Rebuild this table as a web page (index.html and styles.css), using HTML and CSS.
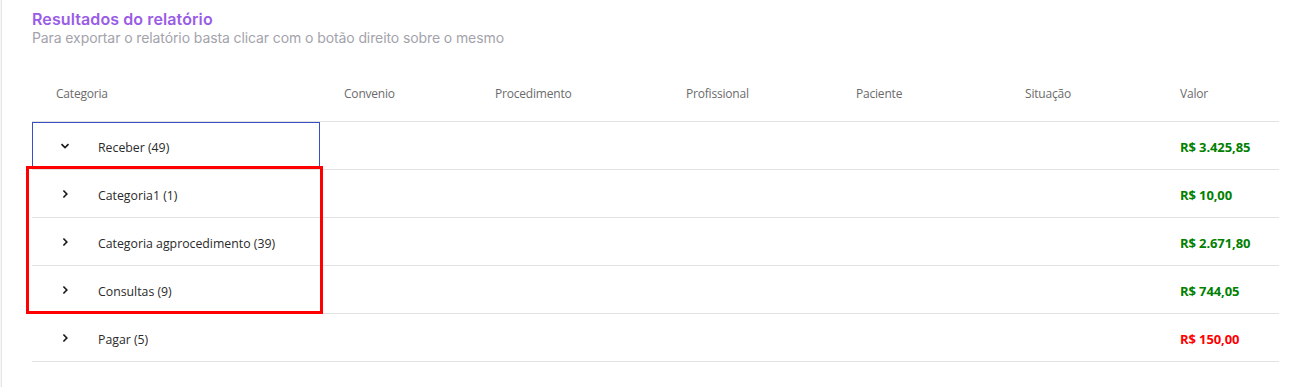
FILE: index.html
```html
<!DOCTYPE html>
<html lang="pt-BR">
<head>
<meta charset="utf-8">
<title>Resultados do relatório</title>
<link rel="stylesheet" href="styles.css">
</head>
<body>
<div class="card">
  <header class="head">
    <h1 class="title">Resultados do relatório</h1>
    <p class="subtitle">Para exportar o relatório basta clicar com o botão direito sobre o mesmo</p>
  </header>
  <div class="table">
    <div class="row header">
      <div class="cell">Categoria</div>
      <div class="cell">Convenio</div>
      <div class="cell">Procedimento</div>
      <div class="cell">Profissional</div>
      <div class="cell">Paciente</div>
      <div class="cell">Situação</div>
      <div class="cell">Valor</div>
    </div>
    <div class="row">
      <div class="cell cat focused">
        <svg class="chev" viewBox="0 0 10 10" width="10" height="10"><path d="M1.5 3.2 L5 6.6 L8.5 3.2" fill="none" stroke="#1a1a1a" stroke-width="1.7"/></svg>
        <span>Receber (49)</span>
      </div>
      <div class="cell"></div><div class="cell"></div><div class="cell"></div><div class="cell"></div><div class="cell"></div>
      <div class="cell val pos">R$ 3.425,85</div>
    </div>
    <div class="row">
      <div class="cell cat">
        <svg class="chev" viewBox="0 0 10 10" width="10" height="10"><path d="M3.4 1.5 L6.8 5 L3.4 8.5" fill="none" stroke="#1a1a1a" stroke-width="1.7"/></svg>
        <span>Categoria1 (1)</span>
      </div>
      <div class="cell"></div><div class="cell"></div><div class="cell"></div><div class="cell"></div><div class="cell"></div>
      <div class="cell val pos">R$ 10,00</div>
    </div>
    <div class="row">
      <div class="cell cat">
        <svg class="chev" viewBox="0 0 10 10" width="10" height="10"><path d="M3.4 1.5 L6.8 5 L3.4 8.5" fill="none" stroke="#1a1a1a" stroke-width="1.7"/></svg>
        <span>Categoria agprocedimento (39)</span>
      </div>
      <div class="cell"></div><div class="cell"></div><div class="cell"></div><div class="cell"></div><div class="cell"></div>
      <div class="cell val pos">R$ 2.671,80</div>
    </div>
    <div class="row">
      <div class="cell cat">
        <svg class="chev" viewBox="0 0 10 10" width="10" height="10"><path d="M3.4 1.5 L6.8 5 L3.4 8.5" fill="none" stroke="#1a1a1a" stroke-width="1.7"/></svg>
        <span>Consultas (9)</span>
      </div>
      <div class="cell"></div><div class="cell"></div><div class="cell"></div><div class="cell"></div><div class="cell"></div>
      <div class="cell val pos">R$ 744,05</div>
    </div>
    <div class="row">
      <div class="cell cat">
        <svg class="chev" viewBox="0 0 10 10" width="10" height="10"><path d="M3.4 1.5 L6.8 5 L3.4 8.5" fill="none" stroke="#1a1a1a" stroke-width="1.7"/></svg>
        <span>Pagar (5)</span>
      </div>
      <div class="cell"></div><div class="cell"></div><div class="cell"></div><div class="cell"></div><div class="cell"></div>
      <div class="cell val neg">R$ 150,00</div>
    </div>
    <div class="annotation"></div>
  </div>
</div>
</body>
</html>
```

FILE: styles.css
```css
html, body {
  margin: 0;
  padding: 0;
}
body {
  background: #f7f7f7;
  width: 1314px;
  height: 387px;
  overflow: hidden;
}
.card {
  margin-left: 1px;
  width: 1277px;
  height: 387px;
  background: #ffffff;
  border-left: 1px solid #e4e4e4;
  border-right: 1px solid #e4e4e4;
  padding: 0 30px 0 30px;
}
.head {
  padding-top: 9px;
}
.title {
  margin: 0;
  font-family: Inter, "Noto Sans", sans-serif;
  font-size: 16px;
  font-weight: 600;
  line-height: 20px;
  color: #9a5ce6;
  letter-spacing: 0.1px;
}
.subtitle {
  margin: 0;
  font-family: Inter, "Noto Sans", sans-serif;
  font-size: 14px;
  line-height: 18px;
  color: #a3a3ab;
  letter-spacing: -0.1px;
}
.table {
  position: relative;
  margin-top: 22px;
  width: 1247px;
  font-family: "Open Sans", "Noto Sans", sans-serif;
  font-size: 12px;
}
.row {
  display: grid;
  grid-template-columns: 288px 151px 191px 170px 169px 155px 123px;
  height: 47px;
  border-bottom: 1px solid #e2e2e2;
}
.row > .cell {
  padding-top: 3px;
}
.row.header {
  height: 52px;
  color: #6b6b6b;
  letter-spacing: -0.2px;
}
.row.header > .cell {
  padding-top: 0;
  padding-bottom: 3px;
}
.cell {
  display: flex;
  align-items: center;
  padding-left: 24px;
  box-sizing: border-box;
}
.cat {
  color: #2a2a2a;
  font-size: 12.3px;
}
.chev {
  margin-left: 4px;
  margin-right: 28px;
  position: relative;
  top: -1px;
}
.focused {
  outline: 1px solid #3a4fc4;
  outline-offset: -1px;
}
.val {
  font-weight: 700;
  font-size: 13px;
  letter-spacing: -0.1px;
}
.pos { color: #008000; }
.neg { color: #ff0000; }
.annotation {
  position: absolute;
  left: -6px;
  top: 97px;
  width: 291px;
  height: 142px;
  border: 3px solid #ff0000;
  pointer-events: none;
}
```
